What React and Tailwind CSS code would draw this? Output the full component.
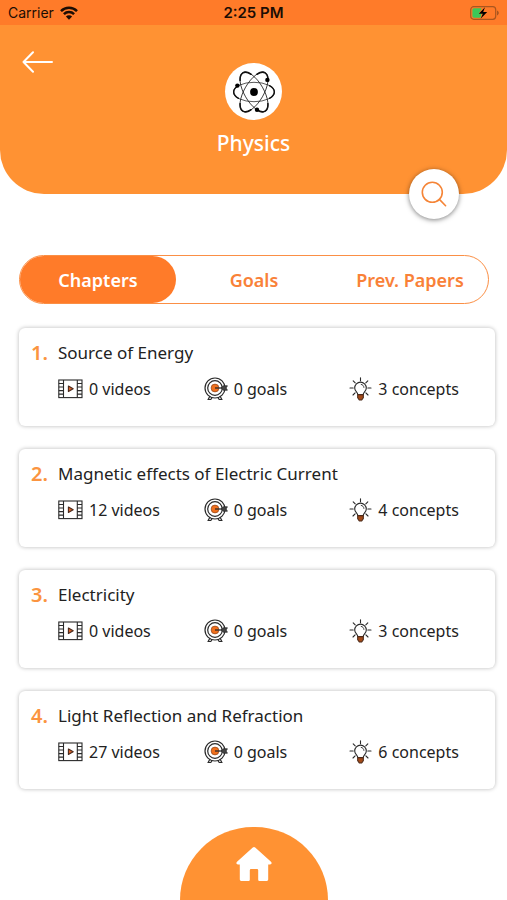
import React, { useState } from 'react';

const tabs = ['Chapters', 'Goals', 'Prev. Papers'];

const chapters = [
	{ id: 1, title: 'Source of Energy', videos: 0, goals: 0, concepts: 3 },
	{ id: 2, title: 'Magnetic effects of Electric Current', videos: 12, goals: 0, concepts: 4 },
	{ id: 3, title: 'Electricity', videos: 0, goals: 0, concepts: 3 },
	{ id: 4, title: 'Light Reflection and Refraction', videos: 27, goals: 0, concepts: 6 }
];

const WifiIcon = () => (
	<svg width="18" height="14" viewBox="0 0 18 14" fill="none" stroke="#1c0d04" strokeWidth="2.5" aria-hidden="true">
		<path d="M1 5.1a11.4 11.4 0 0 1 16 0" />
		<path d="M3.9 8.2a7.3 7.3 0 0 1 10.2 0" />
		<path d="M9 13.8 5.9 10.5a4.4 4.4 0 0 1 6.2 0z" fill="#1c0d04" stroke="none" />
	</svg>
);

const BatteryIcon = () => (
	<svg width="30" height="14" viewBox="0 0 30 14" aria-hidden="true">
		<rect x="1.7" y="0.7" width="25" height="12.6" rx="3" fill="none" stroke="#a9561f" strokeWidth="1.2" />
		<path d="M5 2.3h7.6L10 7.6h2.6L11.4 11.7H5A1.6 1.6 0 0 1 3.4 10V4A1.6 1.6 0 0 1 5 2.3z" fill="#3bc858" />
		<path d="M16 1.2 9.8 7.8h4L11.6 12.8l6.6-6.8h-4z" fill="#000" />
		<path d="M28 4.6c2.4 1 2.4 3.8 0 4.8z" fill="#a9561f" />
	</svg>
);

const BackIcon = () => (
	<svg width="32" height="22" viewBox="0 0 32 22" fill="none" stroke="#fff" strokeWidth="2" strokeLinecap="round" strokeLinejoin="round" aria-hidden="true">
		<path d="M30 11H1.5M11 1.3 1.5 11l9.5 9.7" />
	</svg>
);

const orbits = [
	'translate(22 22)',
	'translate(22 22) rotate(60) scale(1.09 1)',
	'translate(22 22) rotate(120) scale(1.09 1)'
];

const AtomIcon = () => (
	<svg width="44" height="44" viewBox="0 0 44 44" fill="none" stroke="#111" aria-hidden="true">
		{orbits.map((transform) => (
			<g key={transform} transform={transform}>
				<ellipse rx="20.5" ry="9.7" strokeWidth="0.7" />
				<path d="M-15.5-6.3c-6.4 3.5-6.4 9.1 0 12.6M15.5-6.3c6.4 3.5 6.4 9.1 0 12.6" strokeWidth="1.5" strokeLinecap="round" />
			</g>
		))}
		<g fill="#000" stroke="none">
			<circle cx="22" cy="22" r="3.9" />
			<circle cx="5.4" cy="15.6" r="2.2" />
			<circle cx="35.4" cy="9.9" r="2.2" />
			<circle cx="25" cy="39.8" r="2.2" />
		</g>
	</svg>
);

const SearchIcon = () => (
	<svg width="26" height="26" viewBox="0 0 26 26" fill="none" stroke="#f58436" strokeWidth="1.6" strokeLinecap="round" aria-hidden="true">
		<circle cx="11.3" cy="11.3" r="10" />
		<path d="m18.4 18.4 6.2 6.3" />
	</svg>
);

const VideoIcon = () => (
	<svg width="25" height="20" viewBox="0 0 25 20" fill="none" stroke="#2a2a2a" strokeWidth="1.1" aria-hidden="true">
		<rect x="0.8" y="1" width="23.2" height="17.6" />
		<path d="M5.5 1v17.6M19.3 1v17.6M.8 4.5h4.7M.8 8h4.7M.8 11.6h4.7M.8 15.1h4.7M19.3 4.5H24M19.3 8H24M19.3 11.6H24M19.3 15.1H24" />
		<path d="m10.4 7.1 4.8 2.7-4.8 2.7z" fill="#d9632b" stroke="#4a2a1c" strokeLinejoin="round" />
	</svg>
);

const GoalIcon = () => (
	<svg width="24" height="24" viewBox="0 0 24 24" fill="none" stroke="#2a2a2a" aria-hidden="true">
		<path d="m6.2 18.5-2 4h2.6l1.6-2.6M15.8 18.5l2 4h-2.6l-1.6-2.6" strokeWidth="1.2" />
		<circle cx="11" cy="11" r="10" strokeWidth="1.2" fill="#fff" />
		<circle cx="11" cy="11" r="7.3" strokeWidth="1.2" />
		<circle cx="11" cy="11" r="3.9" fill="#f0701d" stroke="#8c441b" strokeWidth="0.7" />
		<path d="M11 11h10" strokeWidth="1.3" />
		<path d="m17.2 11 2.2-2.2h4L22 11l1.4 2.2h-4z" fill="#444" strokeWidth="0.8" />
	</svg>
);

const BulbIcon = () => (
	<svg width="23" height="24" viewBox="0 0 23 24" fill="none" stroke="#2a2a2a" strokeWidth="1.1" strokeLinecap="round" aria-hidden="true">
		<path d="M11.5.8v3M4.2 3.8l2 2M18.8 3.8l-2 2M1 11h3.2M18.8 11H22M4 18l2.1-2.1M19 18l-2.1-2.1" />
		<path d="M8.8 17.6c0-2.4-3.1-3.2-3.1-6.7a5.8 5.8 0 0 1 11.6 0c0 3.5-3.1 4.3-3.1 6.7z" />
		<path d="M12.2 7.4c1.6.3 2.6 1.4 2.7 3" strokeWidth="0.9" />
		<path d="M8.7 17.6h5.6v3.2l-1.6 2.2h-2.4l-1.6-2.2z" fill="#a34a18" stroke="#4b2a1a" strokeLinejoin="round" />
	</svg>
);

const HomeIcon = () => (
	<svg width="36" height="36" viewBox="0 0 36 36" fill="#fff" aria-hidden="true">
		<path d="M16.8 1.6a1.9 1.9 0 0 1 2.4 0L35 15.8c1.2 1.1.6 2.6-1 2.6h-1.8v15.2a1.4 1.4 0 0 1-1.4 1.4h-7.4a1.2 1.2 0 0 1-1.2-1.2V24.2a1.2 1.2 0 0 0-1.2-1.2h-6a1.2 1.2 0 0 0-1.2 1.2v9.6a1.2 1.2 0 0 1-1.2 1.2H5.2a1.4 1.4 0 0 1-1.4-1.4V18.4H2c-1.6 0-2.2-1.5-1-2.6z" />
	</svg>
);

const ChapterCard = ({ chapter }) => (
	<li className="flex rounded-md bg-white pt-[11px] pb-[25px] pl-3 shadow-[0_0_4px_rgba(0,0,0,0.28)]">
		<span className="w-[27px] shrink-0 text-xl leading-7 font-semibold text-[#fb9440]">{chapter.id}.</span>
		<div className="min-w-0 flex-1">
			<h2 className="text-[17px] leading-7">{chapter.title}</h2>
			<div className="mt-[10px] grid grid-cols-3 text-base leading-6">
				<span className="flex items-center gap-1.5"><VideoIcon />{chapter.videos} videos</span>
				<span className="flex items-center gap-1.5"><GoalIcon />{chapter.goals} goals</span>
				<span className="flex items-center gap-1.5"><BulbIcon />{chapter.concepts} concepts</span>
			</div>
		</div>
	</li>
);

const App = () => {
	const [activeTab, setActiveTab] = useState('Chapters');

	return (
		<div className="flex min-h-screen flex-col bg-white font-['Noto_Sans',sans-serif] text-[#222]">
			<div className="grid grid-cols-3 items-center bg-[#ff7b29] px-2 pt-0.5 pb-px font-['Inter',sans-serif] text-sm leading-[22px] text-[#1c0d04]">
				<span className="flex items-center gap-1.5">Carrier <WifiIcon /></span>
				<span className="text-center text-[15px] font-semibold">2:25 PM</span>
				<span className="flex justify-end"><BatteryIcon /></span>
			</div>

			<header className="relative flex flex-col items-center rounded-b-[44px] bg-[#ff9233] pt-[38px] pb-[35px] text-white">
				<button aria-label="Back" className="absolute top-[26px] left-[22px]">
					<BackIcon />
				</button>
				<div className="flex size-[57px] items-center justify-center rounded-full bg-white">
					<AtomIcon />
				</div>
				<h1 className="mt-[7px] text-[21px] leading-8 font-medium">Physics</h1>
				<button
					aria-label="Search"
					className="absolute right-12 -bottom-[25px] flex size-[50px] items-center justify-center rounded-full bg-white shadow-[0_1px_5px_rgba(0,0,0,0.5)]"
				>
					<SearchIcon />
				</button>
			</header>

			<div className="mt-[61px] mr-[18px] ml-[19px] flex rounded-full border border-[#fb8f45]">
				{tabs.map((tab) => (
					<button
						key={tab}
						onClick={() => setActiveTab(tab)}
						className={`flex-1 rounded-full pt-[11px] pb-[9px] text-lg leading-[27px] font-semibold whitespace-nowrap ${
							activeTab === tab ? 'bg-[#ff7b29] text-white' : 'text-[#f98138]'
						}`}
					>
						{tab}
					</button>
				))}
			</div>

			<ul className="mt-6 mr-3 mb-9 ml-[19px] flex flex-col gap-[23px]">
				{chapters.map((chapter) => (
					<ChapterCard key={chapter.id} chapter={chapter} />
				))}
			</ul>

			<nav className="mt-auto flex justify-center">
				<a href="#home" aria-label="Home" className="flex h-[73px] w-[148px] items-center justify-center rounded-t-full bg-[#ff9233]">
					<HomeIcon />
				</a>
			</nav>
		</div>
	);
};

export default App;
